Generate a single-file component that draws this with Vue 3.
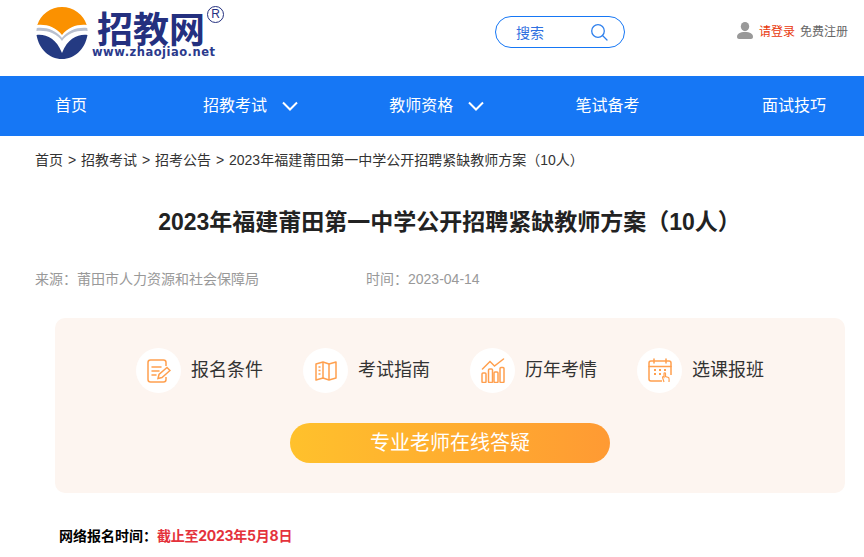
<template>
  <div class="page">
    <header class="top">
      <a class="logo">
        <svg class="logo-mark" width="52" height="52" viewBox="0 0 52 52">
          <path d="M1.300 18A26 26 0 0 1 50.700 18C42 17 32 20 26 28C20 20 10 17 1.300 18Z" fill="#fb9100" />
          <path d="M.8 21C10 20 20 23 26 31C32 23 42 20 51.200 21L51.600 24C42 23 31 26 26 34C21 26 10 23 .4 24Z" fill="#b9c0cf" />
          <path d="M.5 28C10 27 20 31 26 46C32 31 42 27 51.500 28C49 42 39 52 26 52S3 42 .5 28Z" fill="#243a82" />
        </svg>
        <div class="logo-words">
          <div class="logo-name">招教网<span class="logo-reg">R</span></div>
          <div class="logo-url">www.zhaojiao.net</div>
        </div>
      </a>
      <div class="search">
        <span>搜索</span>
        <svg width="18" height="18" viewBox="0 0 18 18" fill="none" stroke="#2f80ed" stroke-width="1.300">
          <circle cx="8" cy="8" r="6.300" />
          <path d="M12.500 12.500L17 17" stroke-linecap="round" />
        </svg>
      </div>
      <div class="user">
        <svg width="16" height="17" viewBox="0 0 16 17" fill="#999">
          <ellipse cx="8" cy="4.600" rx="4.200" ry="4.600" />
          <path d="M0 15C0 11.500 3 10 8 10S16 11.500 16 15C16 16.300 15 17 14 17H2C1 17 0 16.300 0 15Z" />
        </svg>
        <a class="login">请登录</a>
        <a class="reg">免费注册</a>
      </div>
    </header>

    <nav class="nav">
      <a v-for="item in navItems" :key="item.label" class="nav-item">
        {{ item.label }}
        <svg v-if="item.sub" class="chev" width="16" height="10" viewBox="0 0 16 10" fill="none" stroke="#fff" stroke-width="2">
          <path d="M1 1.500L8 8.500L15 1.500" />
        </svg>
      </a>
    </nav>

    <div class="crumbs">
      <span>首页</span><i>&gt;</i><span>招教考试</span><i>&gt;</i><span>招考公告</span><i>&gt;</i><span>2023年福建莆田第一中学公开招聘紧缺教师方案（10人）</span>
    </div>

    <h1 class="title">2023年福建莆田第一中学公开招聘紧缺教师方案（10人）</h1>

    <div class="meta">
      <span>来源：莆田市人力资源和社会保障局</span>
      <span>时间：2023-04-14</span>
    </div>

    <section class="card">
      <div class="links">
        <a class="link">
          <span class="circle">
            <svg width="24" height="24" viewBox="0 0 24 24" fill="none" stroke="#ffa04f" stroke-width="1.500">
              <path d="M19 7V3.500C19 2 18 1 16.500 1H3.500C2 1 1 2 1 3.500V20.500C1 22 2 23 3.500 23H16.500C18 23 19 22 19 20.500V18" />
              <path d="M5 8H14M5 12H12M5 16H9" stroke-linecap="round" />
              <path d="M11 19.500L12 15.500L20 8.500L23 11.500L15 18.500Z" />
            </svg>
          </span>
          <span class="label">报名条件</span>
        </a>
        <a class="link">
          <span class="circle">
            <svg width="22" height="20" viewBox="0 0 22 20" fill="none" stroke="#ffa04f" stroke-width="1.500">
              <path d="M1 3L8 1L14 3L21 1V17L14 19L8 17L1 19Z" stroke-linejoin="round" />
              <path d="M8 1V17M14 3V19" />
              <path d="M3.500 6H5.500M3.500 9.500H5.500M3.500 13H5.500" />
            </svg>
          </span>
          <span class="label">考试指南</span>
        </a>
        <a class="link">
          <span class="circle">
            <svg width="24" height="25" viewBox="0 0 24 25" fill="none" stroke="#ffa04f" stroke-width="1.500">
              <path d="M1.500 11L9 3.500L13.500 8L22.500 1" stroke-linecap="round" />
              <rect x="1" y="15" width="4" height="9.500" rx="1" />
              <rect x="7.500" y="11" width="4" height="13.500" rx="1" />
              <rect x="13" y="14" width="4" height="10.500" rx="1" />
              <rect x="19" y="9.500" width="4" height="15" rx="1" />
            </svg>
          </span>
          <span class="label">历年考情</span>
        </a>
        <a class="link">
          <span class="circle">
            <svg width="24" height="25" viewBox="0 0 24 25" fill="none" stroke="#ffa04f" stroke-width="1.500">
              <path d="M14 23H3C2 23 1 22 1 21V5C1 4 2 3 3 3H21C22 3 23 4 23 5V17" />
              <path d="M1 8.500H23M6 1V5M18 1V5" stroke-linecap="round" />
              <path d="M6 12H8M11 12H13M16 12H18M6 16H8M11 16H13" stroke-width="1.800" />
              <path d="M16 24L14.500 19.500C14.500 18.500 15.500 18.500 16 19V15.500C16 14.500 17.500 14.500 17.500 15.500V18.500L20.500 19.500C21.300 20 21.300 21 21 24" stroke-width="1.200" />
            </svg>
          </span>
          <span class="label">选课报班</span>
        </a>
      </div>
      <a class="ask">专业老师在线答疑</a>
    </section>

    <p class="signup"><b>网络报名时间：</b><b class="red">截止至2023年5月8日</b></p>
  </div>
</template>

<script setup>
const navItems = [
  { label: '首页' },
  { label: '招教考试', sub: true },
  { label: '教师资格', sub: true },
  { label: '笔试备考' },
  { label: '面试技巧' }
]
</script>

<style>
html, body { margin: 0; background: #fff; }
</style>

<style scoped>
.page {
  width: 864px;
  height: 557px;
  overflow: hidden;
  font-family: "Liberation Sans", "Noto Sans CJK SC", sans-serif;
  color: #333;
}
.top {
  height: 76px;
  display: flex;
  align-items: flex-start;
  padding-left: 36px;
  box-sizing: border-box;
}
.logo {
  width: 459px;
  display: flex;
  align-items: flex-start;
  padding-top: 7px;
  box-sizing: border-box;
}
.logo-mark { flex: none; }
.logo-words {
  margin-left: 4px;
}
.logo-name {
  position: relative;
  margin: 2px 0 0 5px;
  height: 36px;
  font-size: 36px;
  line-height: 36px;
  font-weight: 700;
  font-family: "Noto Sans CJK SC", sans-serif;
  color: #24307f;
  white-space: nowrap;
}
.logo-reg {
  position: absolute;
  left: 110px;
  top: -3px;
  width: 15px;
  height: 15px;
  border: 1.500px solid #24307f;
  border-radius: 50%;
  font-family: "Liberation Sans", sans-serif;
  font-size: 12px;
  line-height: 15px;
  font-weight: 400;
  text-align: center;
}
.logo-url {
  font-family: "DejaVu Sans", sans-serif;
  font-size: 11.500px;
  line-height: 14px;
  font-weight: 700;
  letter-spacing: .5px;
  color: #2b3a8c;
  white-space: nowrap;
}
.search {
  width: 130px;
  height: 32px;
  box-sizing: border-box;
  margin-top: 16px;
  border: 1px solid #1677f5;
  border-radius: 16px;
  display: flex;
  align-items: center;
  justify-content: space-between;
  padding: 0 16px 0 20px;
  font-size: 14px;
  color: #2f6fe0;
}
.user {
  margin-left: 112px;
  margin-top: 22px;
  display: flex;
  align-items: center;
  font-size: 12px;
}
.login { margin-left: 6px; color: #e8380d; }
.reg { margin-left: 5px; color: #666; }

.nav {
  height: 60px;
  box-sizing: border-box;
  background: #1677f5;
  display: flex;
  align-items: center;
  padding: 0 0 4px 55px;
  color: #fff;
  font-size: 16px;
}
.nav-item {
  display: flex;
  align-items: center;
  width: 186.300px;
  flex: none;
}
.nav-item:first-child { width: 148px; }
.chev { margin-left: 15px; margin-top: 4px; }

.crumbs {
  margin: 14px 0 0 35px;
  font-size: 14px;
  line-height: 20px;
  white-space: nowrap;
}
.crumbs i {
  display: inline-block;
  width: 18px;
  font-style: normal;
  text-align: center;
}
.title {
  margin: 35px 0 0;
  padding-left: 35px;
  text-align: center;
  font-size: 23px;
  line-height: 34px;
  font-weight: 700;
  color: #222;
}
.meta {
  margin: 30px 0 0 35px;
  display: flex;
  gap: 107px;
  font-size: 14px;
  line-height: 20px;
  color: #999;
}
.card {
  margin: 29px 19px 0 55px;
  height: 175px;
  box-sizing: border-box;
  padding-top: 30px;
  border-radius: 10px;
  background: #fdf5f0;
  display: flex;
  flex-direction: column;
  align-items: center;
}
.links {
  display: flex;
  gap: 40px;
}
.link {
  display: flex;
  align-items: center;
  gap: 10px;
  font-size: 18px;
  color: #333;
}
.label { padding-bottom: 6px; }
.circle {
  width: 45px;
  height: 45px;
  border-radius: 50%;
  background: #fff;
  display: flex;
  align-items: center;
  justify-content: center;
}
.ask {
  margin-top: 30px;
  width: 320px;
  height: 40px;
  border-radius: 20px;
  background: linear-gradient(90deg, #ffc12c, #ff9a33);
  color: #fff;
  font-size: 20px;
  line-height: 40px;
  text-align: center;
}
.signup {
  margin: 33px 0 0 59px;
  font-size: 14px;
  line-height: 20px;
  color: #000;
}
.red {
  font-family: Inter, "Noto Sans CJK SC", sans-serif;
  letter-spacing: -.25px;
  color: #e4323c;
}
</style>
